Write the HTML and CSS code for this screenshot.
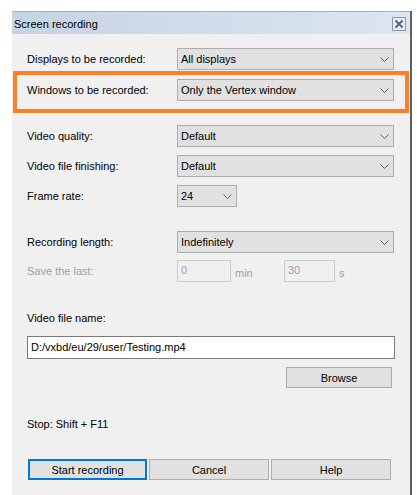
FILE: index.html
```html
<!DOCTYPE html>
<html>
<head>
<meta charset="utf-8">
<link rel="stylesheet" href="styles.css">
</head>
<body>
<div class="dialog">
  <div class="titlebar">
    <span class="title">Screen recording</span>
    <span class="close">
      <svg width="10" height="10" viewBox="0 0 10 10"><path d="M1.5 1.5 L8.5 8.5 M8.5 1.5 L1.5 8.5" stroke="#5a6675" stroke-width="2"/></svg>
    </span>
  </div>
  <div class="content">
    <div class="row r1">
      <span class="label">Displays to be recorded:</span>
      <div class="select wide"><span>All displays</span><svg class="chev" width="9" height="5" viewBox="0 0 9 5"><polyline points="0.5,0.5 4.5,4.5 8.5,0.5" fill="none" stroke="#606060"/></svg></div>
    </div>
    <div class="highlight">
      <div class="row">
        <span class="label hl">Windows to be recorded:</span>
        <div class="select wide"><span>Only the Vertex window</span><svg class="chev" width="9" height="5" viewBox="0 0 9 5"><polyline points="0.5,0.5 4.5,4.5 8.5,0.5" fill="none" stroke="#606060"/></svg></div>
      </div>
    </div>
    <div class="row r-vq">
      <span class="label">Video quality:</span>
      <div class="select wide"><span>Default</span><svg class="chev" width="9" height="5" viewBox="0 0 9 5"><polyline points="0.5,0.5 4.5,4.5 8.5,0.5" fill="none" stroke="#606060"/></svg></div>
    </div>
    <div class="row r-gap8">
      <span class="label">Video file finishing:</span>
      <div class="select wide"><span>Default</span><svg class="chev" width="9" height="5" viewBox="0 0 9 5"><polyline points="0.5,0.5 4.5,4.5 8.5,0.5" fill="none" stroke="#606060"/></svg></div>
    </div>
    <div class="row r-gap8">
      <span class="label">Frame rate:</span>
      <div class="select small"><span>24</span><svg class="chev" width="9" height="5" viewBox="0 0 9 5"><polyline points="0.5,0.5 4.5,4.5 8.5,0.5" fill="none" stroke="#606060"/></svg></div>
    </div>
    <div class="row r-rl">
      <span class="label">Recording length:</span>
      <div class="select wide"><span>Indefinitely</span><svg class="chev" width="9" height="5" viewBox="0 0 9 5"><polyline points="0.5,0.5 4.5,4.5 8.5,0.5" fill="none" stroke="#606060"/></svg></div>
    </div>
    <div class="row r-save">
      <span class="label disabled">Save the last:</span>
      <div class="dis-input i1">0</div>
      <span class="unit u1">min</span>
      <div class="dis-input i2">30</div>
      <span class="unit">s</span>
    </div>
    <div class="fname-label">Video file name:</div>
    <div class="text-input">D:/vxbd/eu/29/user/Testing.mp4</div>
    <div class="browse-row"><button class="btn browse">Browse</button></div>
    <div class="stop">Stop: Shift + F11</div>
    <div class="buttons">
      <button class="btn primary">Start recording</button>
      <button class="btn">Cancel</button>
      <button class="btn">Help</button>
    </div>
  </div>
</div>
</body>
</html>
```

FILE: styles.css
```css
html, body {
  margin: 0;
  padding: 0;
  background: #ffffff;
}
body {
  font-family: "Liberation Sans", Arial, sans-serif;
  font-size: 11px;
  color: #000;
}
.dialog {
  margin: 11px 0 0 12px;
  width: 398px;
  height: 484px;
  border-right: 2px solid #5f5f5f;
  background: #f0f0f0;
  box-sizing: content-box;
}
.titlebar {
  height: 22px;
  border-top: 1px solid #a7b0ba;
  background: linear-gradient(to right, #c6d3e2, #dce6f2);
  display: flex;
  align-items: center;
  justify-content: space-between;
  padding: 0 4px 0 2px;
}
.title {
  font-size: 11px;
  line-height: 14px;
  padding-top: 1px;
}
.close {
  width: 12px;
  height: 12px;
  border: 1px solid #8e9aa8;
  background: #e4ebf3;
  display: flex;
  align-items: center;
  justify-content: center;
  margin-top: 1px;
}
.content {
  padding: 14px 0 0 0;
}
.row {
  display: flex;
  align-items: center;
  height: 22px;
  padding-left: 15px;
}
.label {
  width: 150px;
  flex: none;
  white-space: nowrap;
}
.highlight {
  margin: 1px 0 0 1px;
  width: 388px;
  border: 4px solid #fb7f24;
  padding: 4px 0 8px 0;
}
.highlight .row {
  padding-left: 10px;
}
.select {
  height: 22px;
  box-sizing: border-box;
  border: 1px solid #adadad;
  background: #e1e1e1;
  display: flex;
  align-items: center;
  justify-content: space-between;
  padding: 0 4px 0 3px;
}
.select.wide { width: 217px; }
.select.small { width: 60px; }
.chev { flex: none; margin-top: 1px; }
.r-vq { margin-top: 12px; }
.r-gap8 { margin-top: 8px; }
.r-rl { margin-top: 24px; }
.r-save { margin-top: 7px; }
.disabled { color: #a0a0a0; }
.dis-input {
  height: 22px;
  box-sizing: border-box;
  border: 1px solid #cccccc;
  background: #f0f0f0;
  color: #a0a0a0;
  padding: 2px 0 0 3px;
  line-height: 14px;
}
.i1 { width: 54px; }
.i2 { width: 51px; }
.unit {
  color: #a0a0a0;
  padding-left: 4px;
  padding-top: 3px;
}
.u1 { width: 49px; }
.fname-label {
  margin: 29px 0 0 15px;
  line-height: 15px;
}
.text-input {
  margin: 10px 0 0 15px;
  width: 368px;
  height: 23px;
  box-sizing: border-box;
  border: 1px solid #7a7a7a;
  background: #ffffff;
  padding: 3px 0 0 3px;
  line-height: 15px;
}
.browse-row {
  display: flex;
  justify-content: flex-end;
  width: 380px;
  margin-top: 8px;
}
.btn {
  font-family: "Liberation Sans", Arial, sans-serif;
  font-size: 11px;
  color: #000;
  background: #e1e1e1;
  border: 1px solid #adadad;
  height: 21px;
  padding: 0;
  margin: 0;
  box-sizing: border-box;
}
.browse { width: 106px; }
.stop {
  margin: 29px 0 0 15px;
  line-height: 15px;
}
.buttons {
  display: flex;
  gap: 2px;
  margin: 27px 0 0 16px;
}
.buttons .btn { width: 120px; }
.buttons .btn.primary {
  width: 119px;
  border: 2px solid #0078d7;
}
```
